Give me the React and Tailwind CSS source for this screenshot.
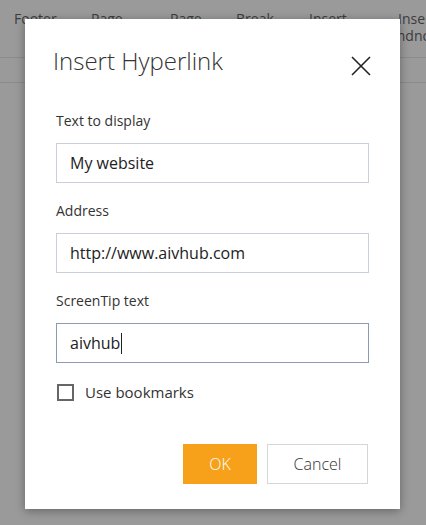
const ribbon = [
  { label: "Footer", left: "left-[14px]" },
  { label: "Page", left: "left-[91px]" },
  { label: "Page", left: "left-[170px]" },
  { label: "Break", left: "left-[236px]" },
  { label: "Insert", left: "left-[309px]" },
];

function Field({ label, value, focused }) {
  return (
    <div>
      <label className="block text-[14px] leading-5 text-[#333]">{label}</label>
      <div
        className={
          "mt-[12px] flex h-[40px] items-center border px-[13px] text-[16px] text-[#222] " +
          (focused ? "border-[#8c9bb3]" : "border-[#c9cfdb]")
        }
      >
        {value}
        {focused && <span className="ml-[1px] inline-block h-[21px] w-px bg-[#222]" />}
      </div>
    </div>
  );
}

export default function App() {
  return (
    <div
      className="relative h-[525px] w-[426px] overflow-hidden bg-[#9a9a9a]"
      style={{ fontFamily: "'Open Sans', 'Noto Sans', sans-serif" }}
    >
      {/* ribbon behind the overlay */}
      <div className="h-[58px] border-b border-[#8b8b8b]">
        {ribbon.map((r, i) => (
          <div
            key={i}
            className={"absolute top-[11px] whitespace-nowrap text-[14px] leading-[16px] text-[#3c3c3c] " + r.left}
          >
            {r.label}
          </div>
        ))}
        <div className="absolute left-[398px] top-[10px] text-[14px] leading-[17px] text-[#3c3c3c]">
          <div className="whitespace-nowrap">Insert</div>
          <div className="-ml-[9px] whitespace-nowrap">Endnote</div>
        </div>
      </div>
      <div className="h-[25px] border-b border-[#8b8b8b]" />

      {/* dialog */}
      <div className="absolute left-[25px] top-[19px] h-[490px] w-[375px] bg-white shadow-[0_2px_9px_rgba(0,0,0,0.35)]">
        <div className="flex items-start justify-between pl-[28px] pr-[29px] pt-[26px]">
          <h1 className="text-[24px] font-light leading-[32px] text-[#333]">Insert Hyperlink</h1>
          <svg width="20" height="20" viewBox="0 0 20 20" className="mt-[11px] text-[#222]">
            <path d="M1 1 L19 19 M19 1 L1 19" stroke="currentColor" strokeWidth="1.6" />
          </svg>
        </div>

        <div className="mt-[34px] flex flex-col gap-[18px] px-[31px]">
          <Field label="Text to display" value="My website" />
          <Field label="Address" value="http://www.aivhub.com" />
          <Field label="ScreenTip text" value="aivhub" focused />
        </div>

        <div className="mt-[18px] flex items-center gap-[11px] px-[32px]">
          <span className="block h-[17px] w-[17px] border-2 border-[#666]" />
          <span className="text-[15px] text-[#333]">Use bookmarks</span>
        </div>

        <div className="mt-[40px] flex justify-end gap-[10px] pr-[32px]">
          <button className="h-[40px] w-[74px] bg-[#f7a11a] text-[16px] font-light text-white">
            OK
          </button>
          <button className="h-[40px] w-[101px] border border-[#d6d6d6] bg-white text-[16px] font-light text-[#333]">
            Cancel
          </button>
        </div>
      </div>
    </div>
  );
}
